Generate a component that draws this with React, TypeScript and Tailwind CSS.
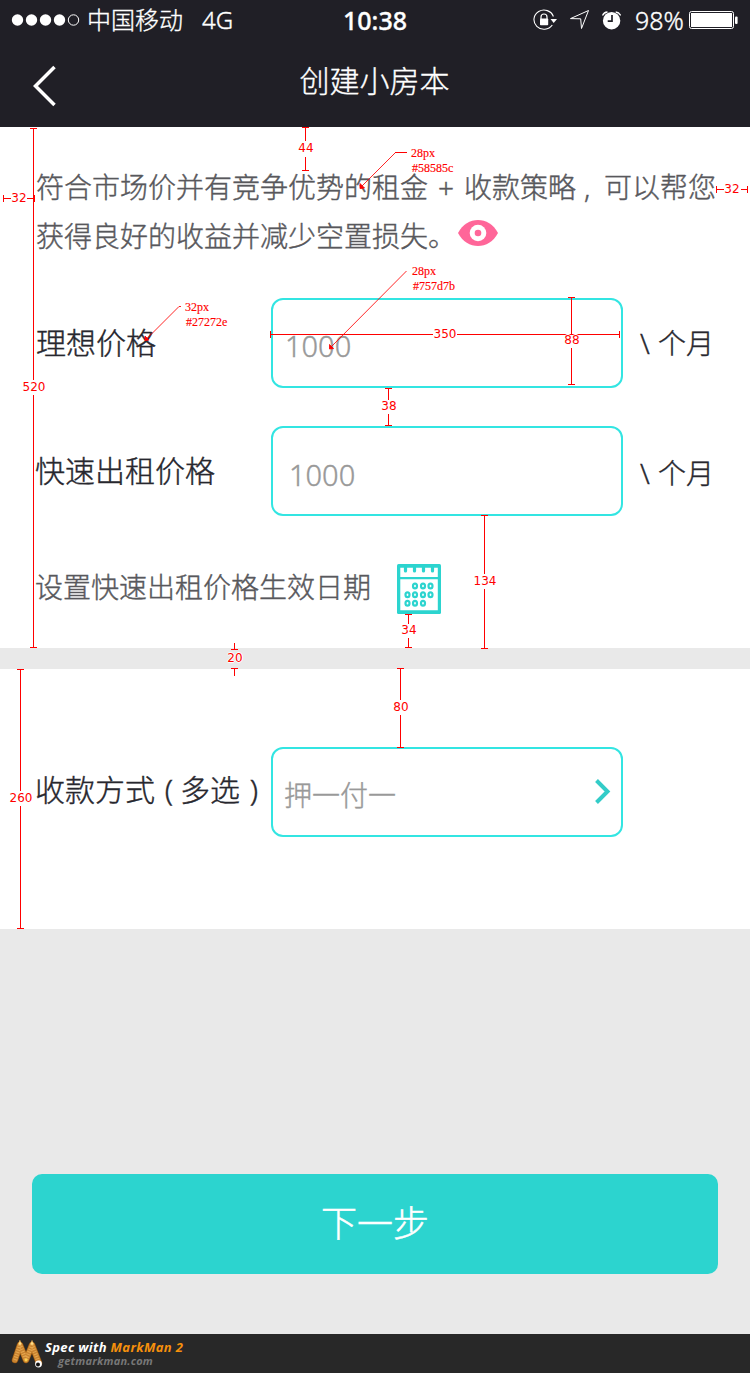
import React from 'react';

type HLabel = { x: number; y: number; text: string; halo?: boolean };

const measures: HLabel[] = [
  { x: 306, y: 148, text: '44' },
  { x: 19, y: 198, text: '32' },
  { x: 732, y: 189, text: '32' },
  { x: 34, y: 387, text: '520' },
  { x: 445, y: 334, text: '350' },
  { x: 572, y: 340, text: '88', halo: true },
  { x: 389, y: 406, text: '38' },
  { x: 485, y: 581, text: '134' },
  { x: 409, y: 630, text: '34' },
  { x: 235, y: 658, text: '20', halo: true },
  { x: 401, y: 707, text: '80' },
  { x: 21, y: 798, text: '260' },
];

const notes = [
  { x: 411, y: 146, size: '28px', color: '#58585c' },
  { x: 412, y: 264, size: '28px', color: '#757d7b' },
  { x: 185, y: 300, size: '32px', color: '#27272e' },
];

function Annotations() {
  return (
    <div className="pointer-events-none absolute inset-0 font-normal">
      <svg width="750" height="1373" className="absolute inset-0" fill="none" stroke="#ff0000" strokeWidth="1" shapeRendering="crispEdges">
        <path d="M302 127.5h7M305.5 127v14M305.5 157v14M302 170.5h7" />
        <path d="M3.5 195v7M4 198.5h7M27 198.5h7M34.5 195v7" />
        <path d="M716.5 186v7M717 189.5h7M741 189.5h7M747.5 186v7" />
        <path d="M30 128.5h7M33.5 128v252M33.5 395v252M30 647.5h7" />
        <path d="M270.5 331v7M271 334.5h162M457 334.5h163M619.5 331v7" />
        <path d="M568 297.5h7M571.5 297v37M571.5 348v37M568 384.5h7" />
        <path d="M385 388.5h7M388.5 388v12M388.5 414v12M385 425.5h7" />
        <path d="M481 515.5h7M484.5 515v59M484.5 589v60M481 648.5h7" />
        <path d="M405 614.5h7M408.5 614v10M408.5 638v10M405 647.5h7" />
        <path d="M231 649.5h7M234.5 643v6M231 668.5h7M234.5 669v7" />
        <path d="M397 668.5h7M400.5 668v32M400.5 715v32M397 747.5h7" />
        <path d="M17 669.5h7M20.5 669v122M20.5 806v122M17 928.5h7" />
        <path d="M395 152.5h12" />
      </svg>
      <svg width="750" height="1373" className="absolute inset-0" fill="none" stroke="#ff0000" strokeWidth="0.85">
        <path d="M395.5 152.5L361 187M406.500 271L331 347M181 306.500H179L146 339.500" />
        <path d="M360 183.500l4.500 4.500l-4.500 .5zM329.500 344.500l4 4l-4 .5zM145 336l4 4l-4 .5z" fill="#ff0000" />
      </svg>
      {measures.map((m) => (
        <span
          key={`${m.text}-${m.x}`}
          style={{ left: m.x, top: m.y }}
          className={`absolute -translate-x-1/2 -translate-y-1/2 font-['DejaVu_Sans',sans-serif] text-[12px] leading-[14px] text-[#ff0000] ${
            m.halo ? '[text-shadow:1px_0_#fff,-1px_0_#fff,0_1px_#fff,0_-1px_#fff]' : ''
          }`}
        >
          {m.text}
        </span>
      ))}
      {notes.map((n) => (
        <div
          key={n.color}
          style={{ left: n.x, top: n.y }}
          className="absolute font-['Liberation_Serif',serif] text-[12px] leading-[15px] text-[#ff0000] [-webkit-text-stroke:0.15px_#ff0000]"
        >
          <p>{n.size}</p>
          <p className="pl-px">{n.color}</p>
        </div>
      ))}
    </div>
  );
}

function StatusBar() {
  return (
    <div className="flex h-10 items-center text-white">
      <svg width="70" height="14" viewBox="0 0 70 14" className="ml-[11px] shrink-0" fill="#fff">
        <circle cx="6.500" cy="7" r="5.700" />
        <circle cx="20.500" cy="7" r="5.700" />
        <circle cx="34.500" cy="7" r="5.700" />
        <circle cx="48.500" cy="7" r="5.700" />
        <circle cx="62.500" cy="7" r="5.200" fill="none" stroke="#fff" />
      </svg>
      <span className="ml-[6px] w-[96px] shrink-0 whitespace-nowrap text-[24px] leading-10">中国移动</span>
      <span className="ml-[19px] w-[123px] shrink-0 text-[24px] leading-10">4G</span>
      <span className="ml-[18px] w-[66px] shrink-0 text-[25px] font-medium leading-10">10:38</span>
      <svg width="88" height="24" viewBox="533 8 88 24" className="ml-[124px] shrink-0" fill="none" stroke="#fff">
        <path d="M553.400 16.500A10 9.600 0 1 0 552.300 25" strokeWidth="1.100" />
        <path d="M550.500 19h6.500l-3.300 4z" fill="#fff" stroke="none" />
        <path d="M541 19v-2a3 3 0 0 1 6 0v2" strokeWidth="1.200" />
        <rect x="540" y="18.500" width="8.200" height="6.700" rx="0.800" fill="#fff" stroke="none" />
        <path d="M570.500 18.600L588.500 10.500L581.500 28.500L580.700 18.800z" strokeWidth="1" />
        <circle cx="611.600" cy="20.700" r="8.700" fill="#fff" stroke="none" />
        <path d="M612 15v6.200h-4.300" stroke="#201f26" strokeWidth="1.700" />
        <path d="M602.500 15.500a6 6 0 0 1 5-3.500M620.700 15.500a6 6 0 0 0-5-3.500" strokeWidth="1.300" />
      </svg>
      <span className="ml-[14px] w-[51px] shrink-0 text-[25px] leading-[42px]">98%</span>
      <svg width="52" height="20" viewBox="0 0 52 20" className="ml-[2px] shrink-0">
        <rect x="1.500" y="1.500" width="44" height="17" rx="2" fill="none" stroke="#fff" />
        <rect x="3" y="3" width="41" height="14" fill="#fff" />
        <rect x="47" y="6.500" width="2.600" height="7.500" rx="1" fill="#fff" />
      </svg>
    </div>
  );
}

function CalendarIcon() {
  const dots = [
    [18, 22], [26, 22], [33.5, 22],
    [10.5, 30.7], [18, 30.7], [26, 30.7], [33.5, 30.7],
    [10.5, 39.3], [18, 39.3], [26, 39.3],
  ];
  return (
    <svg width="44" height="50" viewBox="0 0 44 50" fill="none" stroke="#2cd4cf">
      <rect width="44" height="50" rx="1.500" fill="#2cd4cf" stroke="none" />
      <path d="M3.300 3.800h37.500v9.200H3.300zM3.300 15.200h37.500v31H3.300z" fill="#fff" stroke="none" />
      <path d="M8.500 3v4M17.500 3v4M26.500 3v4M35.500 3v4" strokeWidth="3.200" strokeLinecap="round" />
      {dots.map(([cx, cy]) => (
        <ellipse key={`${cx}-${cy}`} cx={cx} cy={cy} rx="2" ry="2.400" strokeWidth="2.200" />
      ))}
    </svg>
  );
}

const box = 'h-[90px] w-[352px] shrink-0 rounded-[12px] border-2 border-[#33e5e2] text-[#999]';

export default function App() {
  return (
    <div className="relative flex h-[1373px] w-[750px] flex-col overflow-hidden bg-[#e9e9e9] font-['Noto_Sans','Noto_Sans_CJK_SC',sans-serif] font-light">
      <header className="h-[127px] bg-[#201f26] text-white [-webkit-text-stroke:0.35px]">
        <StatusBar />
        <div className="grid h-[87px] grid-cols-[1fr_auto_1fr]">
          <svg width="24" height="42" viewBox="0 0 24 42" className="ml-[32px] mt-[25px]" fill="none" stroke="#fff" strokeWidth="3.500">
            <path d="M22.500 2L3.500 21L22.500 40" />
          </svg>
          <h1 className="pr-px text-[30px] leading-[82px]">创建小房本</h1>
        </div>
      </header>

      <section className="h-[521px] bg-white pl-9 [-webkit-text-stroke:0.4px]">
        <div className="whitespace-nowrap pt-[36px] text-[28px] leading-[49px] text-[#58585c]">
          <p>
            符合市场价并有竞争优势的租金
            <span className="inline-block w-9 text-center">+</span>
            收款策略
            <span className="inline-block w-7 pl-2">,</span>
            可以帮您
          </p>
          <div className="flex">
            <p className="w-[422px]">获得良好的收益并减少空置损失。</p>
            <svg width="40" height="26" viewBox="0 0 40 26" className="mt-[8px]">
              <path d="M0 13C9-4.300 31-4.300 40 13C31 30.300 9 30.300 0 13z" fill="#ff6699" />
              <circle cx="20" cy="13" r="8.300" fill="#fff" />
              <circle cx="20" cy="13" r="3.300" fill="#ff6699" />
            </svg>
          </div>
        </div>
        <div className="mt-[37px] flex h-[90px] whitespace-nowrap text-[#27272e]">
          <label className="w-[235px] text-[30px] leading-[90px]">理想价格</label>
          <div className={`${box} pl-[12px] text-[29px] leading-[91px]`}>1000</div>
          <span className="ml-[17px] w-[18px] text-[28px] leading-[90px]">\</span>
          <span className="text-[28px] leading-[90px]">个月</span>
        </div>
        <div className="mt-[38px] flex h-[90px] whitespace-nowrap text-[#27272e]">
          <label className="-ml-px w-[236px] text-[30px] leading-[90px]">快速出租价格</label>
          <div className={`${box} pl-[16px] text-[29px] leading-[94px]`}>1000</div>
          <span className="ml-[17px] w-[18px] text-[28px] leading-[94px]">\</span>
          <span className="text-[28px] leading-[94px]">个月</span>
        </div>
        <div className="-ml-px mt-[48px] flex text-[#58585c]">
          <p className="w-[362px] text-[28px] leading-[46px]">设置快速出租价格生效日期</p>
          <CalendarIcon />
        </div>
      </section>

      <section className="mt-[21px] h-[260px] bg-white pl-9 pt-[78px] [-webkit-text-stroke:0.4px]">
        <div className="-ml-px flex h-[90px] whitespace-nowrap text-[#27272e]">
          <label className="w-[236px] text-[30px] leading-[86px]">
            收款方式
            <span className="inline-block w-[25px] pl-[3px] text-center">(</span>
            多选
            <span className="inline-block w-[25px] pl-[3px] text-center">)</span>
          </label>
          <div className={`${box} flex justify-between pl-[11px] pr-[9px]`}>
            <span className="text-[28px] leading-[92px]">押一付一</span>
            <svg width="18" height="28" viewBox="0 0 18 28" className="mt-[29px]" fill="none" stroke="#33ccc8" strokeWidth="4">
              <path d="M2.500 2.500L13.500 13.500L2.500 24.500" />
            </svg>
          </div>
        </div>
      </section>

      <button className="mx-8 mt-[245px] h-[100px] rounded-[10px] bg-[#2cd4cf] text-[36px] leading-[100px] text-white [-webkit-text-stroke:0.5px]">下一步</button>

      <footer className="mt-auto flex h-[39px] bg-[#282828] font-['Open_Sans','Noto_Sans',sans-serif] font-bold italic">
        <svg width="34" height="30" viewBox="0 0 34 30" className="ml-[11px] mt-[6px] shrink-0" fill="none" strokeLinecap="round">
          <path d="M4 20L9 5L15 20L21 5L28 23" stroke="#8c4f0c" strokeWidth="6.500" strokeLinejoin="round" />
          <path d="M4 20L9 5L15 20L21 5L28 23" stroke="#c98330" strokeWidth="5.500" strokeLinejoin="round" />
          <path d="M4 20L9 5L15 20L21 5L28 23" stroke="#e6a850" strokeWidth="4" strokeDasharray="1 1.500" strokeLinecap="butt" />
          <circle cx="9" cy="3.500" r="1.300" fill="#ffe08a" />
          <circle cx="21" cy="3.500" r="1.300" fill="#ffe08a" />
          <circle cx="15" cy="20" r="1.500" fill="#ffd34d" />
          <circle cx="27.500" cy="24" r="3.400" fill="#fff" />
          <circle cx="27" cy="24.500" r="2" fill="#111" />
        </svg>
        <div className="whitespace-nowrap">
          <p className="pt-[6px] text-[13px] leading-[15px] tracking-[0.34px] text-white">
            Spec with <span className="text-[#f6900c]">MarkMan 2</span>
          </p>
          <p className="pl-[13px] text-[11px] leading-[11px] tracking-[0.22px] text-[#777]">getmarkman.com</p>
        </div>
      </footer>

      <Annotations />
    </div>
  );
}
